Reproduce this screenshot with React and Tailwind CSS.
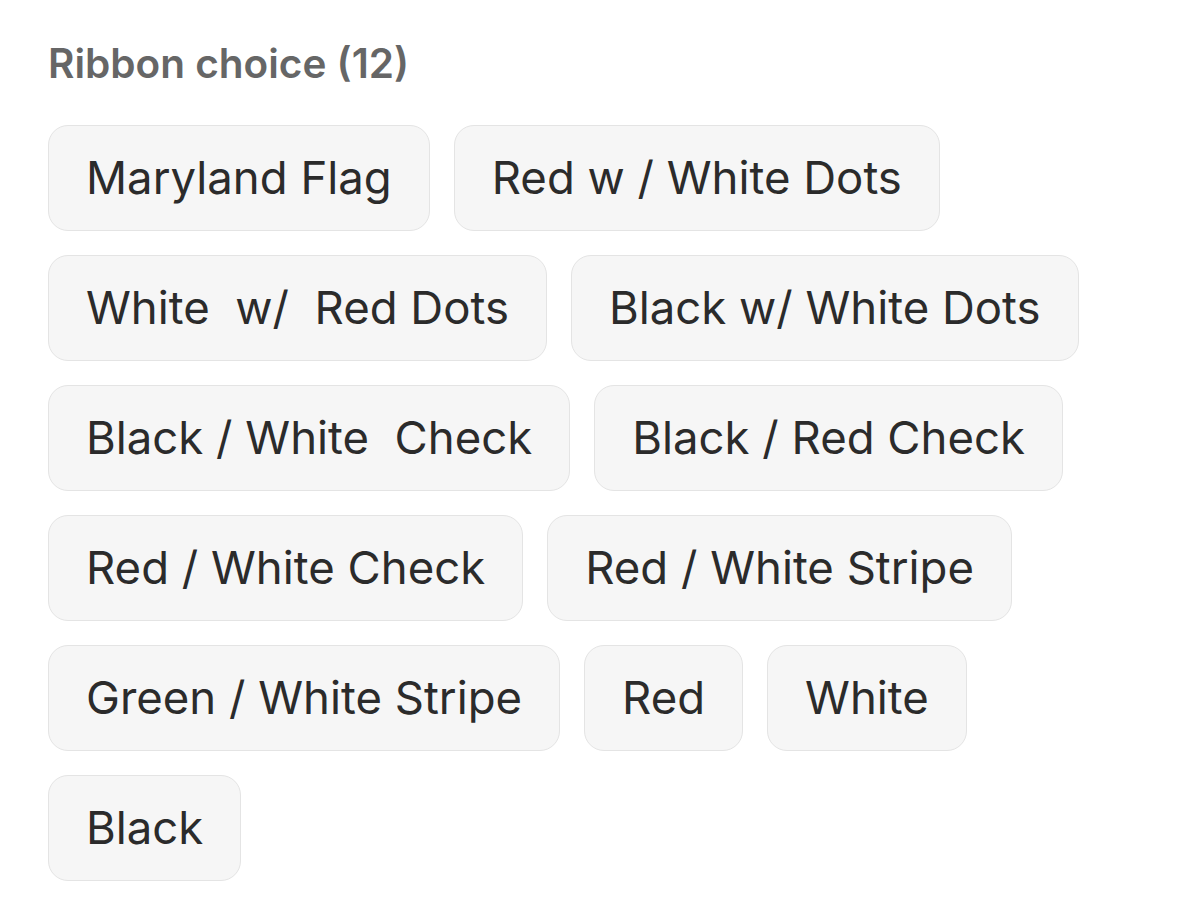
const options = [
  "Maryland Flag",
  "Red w / White Dots",
  "White  w/  Red Dots",
  "Black w/ White Dots",
  "Black / White  Check",
  "Black / Red Check",
  "Red / White Check",
  "Red / White Stripe",
  "Green / White Stripe",
  "Red",
  "White",
  "Black",
];

export default function App() {
  return (
    <div
      className="min-h-[908px] bg-white px-[48px] pt-[38px]"
      style={{ fontFamily: "Inter, 'Noto Sans', sans-serif" }}
    >
      {/* Heading */}
      <h2 className="text-[40.5px] leading-[52px] font-semibold text-[#666666]">
        Ribbon choice ({options.length})
      </h2>

      {/* Chips */}
      <div className="mt-[35px] flex flex-wrap gap-x-[24px] gap-y-[24px]">
        {options.map((opt) => (
          <button
            key={opt}
            className="h-[106px] px-[37px] flex items-center rounded-[20px] border border-[#e4e4e4] bg-[#f6f6f6] text-[45.5px] text-[#2b2b2b] whitespace-pre"
          >
            {opt}
          </button>
        ))}
      </div>
    </div>
  );
}
